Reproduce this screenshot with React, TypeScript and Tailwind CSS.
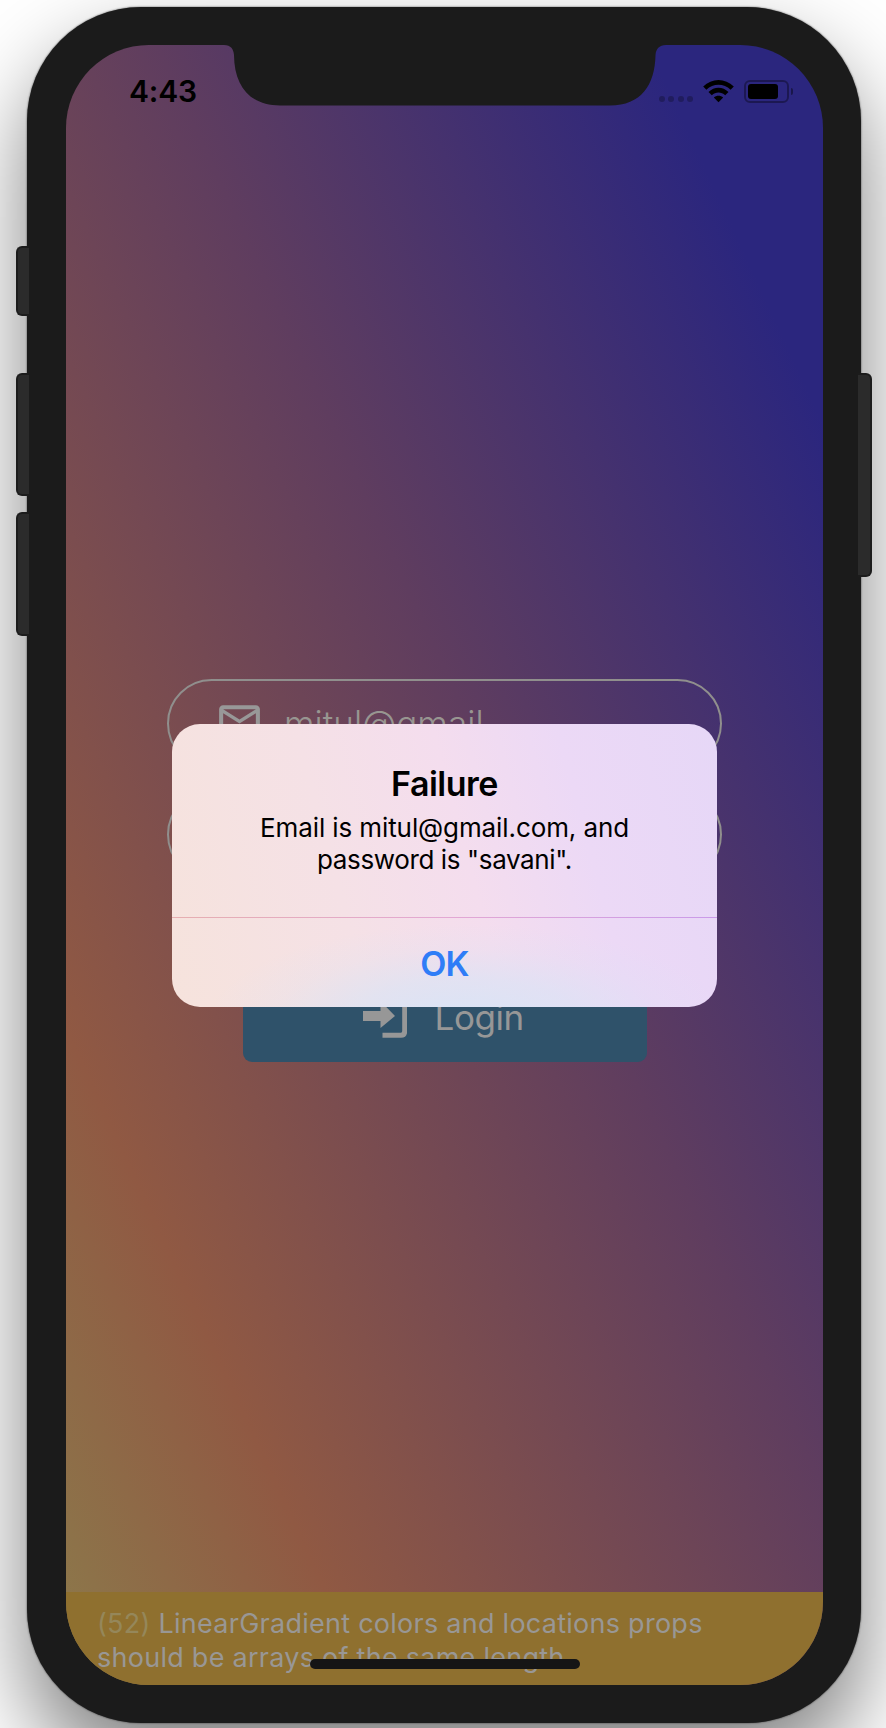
const sideButton =
  "relative z-10 bg-[#2b2b2b] border-2 border-[#1c1c1c]";

function StatusBar() {
  return (
    <div className="flex h-[76px] items-start justify-between pt-[35px] pl-[63px] pr-[30px] text-black">
      <span className="h-[22px] text-[30px] leading-[22px] font-semibold tracking-[-0.2px]">4:43</span>
      <div className="flex h-[23px] items-start">
        <div className="mt-[16px] mr-[10px] flex gap-[3.5px] opacity-25">
          <i className="size-[6px] rounded-full bg-black" />
          <i className="size-[6px] rounded-full bg-black" />
          <i className="size-[6px] rounded-full bg-black" />
          <i className="size-[6px] rounded-full bg-black" />
        </div>
        <svg className="mr-[10px]" width="31" height="23" viewBox="0 0 31 23">
          <path
            d="M0.2 6.6 C8.8 -2.2 22.2 -2.2 30.8 6.6 L27.6 9.8 C21 3 10 3 3.4 9.8 Z"
            fill="black"
          />
          <path
            d="M5.5 12 C11.2 6.3 19.8 6.3 25.5 12 L22.2 15.2 C18.4 11.5 12.6 11.5 8.8 15.2 Z"
            fill="black"
          />
          <path d="M10.8 17.5 C13.4 15 17.6 15 20.2 17.5 L15.5 22.3 Z" fill="black" />
        </svg>
        <div className="h-[23px] w-[45px] rounded-[6px] border-2 border-black/35 p-[2px]">
          <div className="h-[15px] w-[30px] rounded-[3px] bg-black" />
        </div>
        <div className="mt-[8px] ml-[2px] h-[7px] w-[2px] rounded-r-full bg-black/40" />
      </div>
    </div>
  );
}

function Notch() {
  return (
    <svg className="absolute top-0 left-[158px]" width="442" height="61" viewBox="0 0 442 61">
      <path
        d="M0 0 C7 0.3 9.5 4 10 10 C10.2 40 25 60.5 56 60.5 H386 C417 60.5 431 40 431.5 10 C432 4 435 0.3 442 0 V-1 H0 Z"
        fill="#1b1b1b"
      />
    </svg>
  );
}

function LoginForm() {
  return (
    <div className="flex flex-col items-center pt-[558px]">
      <div className="flex h-[89px] w-[555px] items-center rounded-full border-2 border-[#908f8d] pl-[46px]">
        <svg className="-mt-[4px]" width="49" height="49" viewBox="0 0 24 24" fill="#989898">
          <path d="M20 4H4c-1.1 0-1.99.9-1.99 2L2 18c0 1.1.9 2 2 2h16c1.1 0 2-.9 2-2V6c0-1.1-.9-2-2-2zm0 14H4V8l8 5 8-5v10zm-8-7L4 6h16l-8 5z" />
        </svg>
        <span className="ml-[20px] text-[35px] font-[350] tracking-[0.05px] text-[#989691]">mitul@gmail</span>
      </div>
      <div className="mt-[22px] h-[89px] w-[555px] rounded-full border-2 border-[#908f8d]" />
      <div className="mt-[95px] flex h-[88px] w-[404px] items-center rounded-[9px] bg-[#2f526a] pl-[120px]">
        <svg className="-mt-[3px]" width="44" height="44" viewBox="0 0 44 44">
          <path d="M0 16 H17.5 V6 L32 21 L17.5 33 V26 H0 Z" fill="#979797" />
          <path
            d="M19.5 2.5 H38 Q41.7 2.5 41.7 6 V36 Q41.7 40.2 38 40.2 H19.5"
            fill="none"
            stroke="#979797"
            strokeWidth="5"
          />
        </svg>
        <span className="-mt-[2px] ml-[28px] text-[35px] font-[400] tracking-[-0.4px] text-[#979797]">Login</span>
      </div>
    </div>
  );
}

function Alert() {
  return (
    <div className="absolute top-[679px] left-[106px] flex h-[283px] w-[545px] flex-col overflow-hidden rounded-[28px] bg-[radial-gradient(ellipse_260px_100px_at_54%_106%,#d8e4f6_0%,#d8e4f6a0_45%,#d8e4f630_75%,#d8e4f600_100%),linear-gradient(75deg,#f6e3dc_0%,#f5e1e6_32%,#f4ddee_54%,#ecd9f6_74%,#e6d7f7_100%)] text-center">
      <h1 className="mt-[40px] text-[34px] leading-[40px] font-semibold tracking-[-0.5px] text-black">Failure</h1>
      <p className="mt-[8px] text-[26px] leading-[32px] tracking-[-0.1px] text-black">
        Email is mitul@gmail.com, and
        <br />
        <span className="tracking-[-0.38px]">password is "savani".</span>
      </p>
      <div className="mt-[41px] h-px w-full shrink-0 bg-[linear-gradient(90deg,#e6aeb0,#e3a8d3_50%,#ca9ae9)]" />
      <button className="h-[89px] w-full pt-px text-[34px] font-semibold tracking-[-0.7px] text-[#2f7df7]">OK</button>
    </div>
  );
}

function WarningBar() {
  return (
    <div className="absolute bottom-0 left-0 h-[93px] w-full bg-[#8f702f] pt-[15px] pl-[31px] text-[27px] leading-[34px] tracking-[0.26px] whitespace-nowrap text-[#999795]">
      <div>
        <span className="text-[#95875a]">(52)</span> LinearGradient colors and locations props
      </div>
      <div>should be arrays of the same length.</div>
      <div className="absolute bottom-[16px] left-[244px] h-[10px] w-[270px] rounded-full bg-[#151515]" />
    </div>
  );
}

export default function App() {
  return (
    <main className="flex h-[1728px] w-[886px] overflow-hidden bg-white font-['Inter',sans-serif]">
      <div className="flex w-[27px] shrink-0 flex-col items-end pt-[246px]">
        <div className={`${sideButton} -mr-[2px] h-[70px] w-[13px] rounded-l-[6px] border-r-0`} />
        <div className={`${sideButton} -mr-[2px] mt-[57px] h-[123px] w-[13px] rounded-l-[6px] border-r-0`} />
        <div className={`${sideButton} -mr-[2px] mt-[16px] h-[124px] w-[13px] rounded-l-[6px] border-r-0`} />
      </div>
      <div className="mt-[7px] h-[1716px] w-[834px] shrink-0 rounded-[114px] bg-[#1b1b1b] px-[39px] pt-[38px] shadow-[0_44px_88px_rgba(0,0,0,0.5),0_0_2px_rgba(0,0,0,0.7)]">
        <div className="relative h-[1640px] w-[757px] overflow-hidden rounded-[83px] bg-[linear-gradient(to_top_right,#8c7a4b_0%,#905943_20%,#5f3d5f_56%,#2b267e_88.5%)]">
          <StatusBar />
          <Notch />
          <LoginForm />
          <WarningBar />
          <Alert />
        </div>
      </div>
      <div className="flex w-[25px] shrink-0 flex-col pt-[373px]">
        <div className={`${sideButton} -ml-[3px] h-[204px] w-[14px] rounded-r-[6px] border-l-0`} />
      </div>
    </main>
  );
}
